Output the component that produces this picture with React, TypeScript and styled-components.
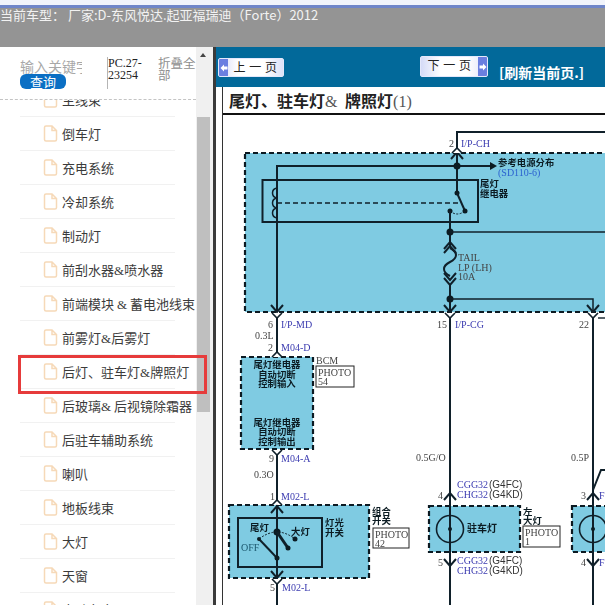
import React from "react";
import styled, { createGlobalStyle } from "styled-components";

const Global = createGlobalStyle`
  html, body { margin: 0; padding: 0; background: #fff; }
  body { font-family: "Noto Sans CJK SC", "Liberation Sans", sans-serif; }
`;

const Page = styled.div`
  width: 605px;
  height: 605px;
  overflow: hidden;
  display: flex;
  flex-direction: column;
`;
const TopStrip = styled.div`
  height: 5px;
  flex: none;
  background: #f1f4fb;
  border-bottom: 3px solid #6f86c9;
`;
const Header = styled.div`
  height: 39px;
  flex: none;
  background: #949494;
  color: #f2f2f2;
  font-size: 13px;
  line-height: 13px;
  white-space: nowrap;
`;
const Body = styled.div`
  flex: 1;
  min-height: 0;
  display: flex;
  position: relative;
`;
const Sidebar = styled.aside`
  width: 196px;
  flex: none;
  display: flex;
  flex-direction: column;
  background: #fff;
`;
const SearchRow = styled.div`
  height: 52px;
  flex: none;
  display: flex;
  padding-left: 20px;
  border-bottom: 1px dashed #c4c4c4;
`;
const SearchCol = styled.div`
  width: 87px;
  flex: none;
  padding-top: 12px;
  display: flex;
  flex-direction: column;
`;
const Keyword = styled.input`
  width: 62px;
  height: 15px;
  padding: 0;
  border: 0;
  outline: 0;
  font: 14px/15px "Noto Sans CJK SC", sans-serif;
  &::placeholder { color: #a8a8a8; opacity: 1; }
`;
const QueryButton = styled.button`
  width: 46px;
  height: 15px;
  padding: 0;
  border: 0;
  border-radius: 6px;
  background: #0b6fc4;
  color: #fff;
  font: 13px/15px "Noto Sans CJK SC", sans-serif;
`;
const CodeBox = styled.div`
  width: 39px;
  height: 32px;
  margin-top: 10px;
  flex: none;
  border-left: 1px solid #b5b5b5;
  color: #222;
  font: 12px/12px "Liberation Serif", serif;
`;
const Collapse = styled.div`
  width: 38px;
  margin: 10px 0 0 11px;
  flex: none;
  color: #8e8e8e;
  font-size: 12.5px;
  line-height: 12px;
`;
const ListClip = styled.div`
  flex: 1;
  min-height: 0;
  overflow: hidden;
`;
const List = styled.ul`
  list-style: none;
  margin: -17px 0 0;
  padding: 0 0 0 20px;
`;
const Item = styled.li`
  width: 132px;
  height: 33px;
  border-bottom: 1px solid #f1f1f1;
  display: flex;
  align-items: center;
  gap: 4px;
  padding-left: 23px;
  white-space: nowrap;
  color: #3b3b3b;
  font-size: 13px;
`;
const Amp = styled.span`
  font-family: "Liberation Serif", serif;
`;
const Scrollbar = styled.div`
  width: 17px;
  flex: none;
  background: #f0f0f0;
  display: flex;
  flex-direction: column;
  align-items: flex-start;
  padding-left: 1px;
  box-sizing: border-box;
`;
const ScrollArrow = styled.div`
  width: 0;
  height: 0;
  margin: 6px 0 0 3px;
  border-left: 3.5px solid transparent;
  border-right: 3.5px solid transparent;
  border-bottom: 4px solid #444;
`;
const ScrollThumb = styled.div`
  width: 13px;
  height: 295px;
  margin-top: 60px;
  background: #bfbfbf;
`;
const Divider = styled.div`
  width: 3px;
  flex: none;
  background: #3a3a3a;
`;
const Highlight = styled.div`
  position: absolute;
  left: 18px;
  top: 308px;
  width: 183px;
  height: 33px;
  border: 3px solid #e63b3b;
  pointer-events: none;
`;
const Main = styled.main`
  flex: 1;
  min-width: 0;
  display: flex;
  flex-direction: column;
  background: #fff;
`;
const Toolbar = styled.div`
  height: 40px;
  flex: none;
  display: flex;
  align-items: flex-start;
  background: #02699a;
`;
const PageButton = styled.button<{ $tall?: boolean; $gap: number }>`
  height: ${(p) => (p.$tall ? 21 : 19)}px;
  width: ${(p) => (p.$tall ? 68 : 66)}px;
  margin: ${(p) => (p.$tall ? 9 : 11)}px 0 0 ${(p) => p.$gap}px;
  padding: 0;
  flex: none;
  display: flex;
  align-items: stretch;
  overflow: hidden;
  border: 1px solid #e4e8fb;
  border-radius: 2px;
  background: linear-gradient(90deg, #d5dbf7, #fff 30%, #fff 70%, #dde2f8);
  color: #222;
  font: 12px/16px "Noto Sans CJK SC", sans-serif;
`;
const ButtonLabel = styled.span`
  flex: 1;
  text-align: center;
  white-space: pre;
  letter-spacing: 0.5px;
`;
const ButtonCap = styled.span`
  width: 9px;
  flex: none;
  background: #6a7fe0;
  display: flex;
  align-items: center;
  justify-content: center;
`;
const Refresh = styled.div`
  margin: 16px 0 0 11px;
  color: #fff;
  font-size: 14px;
  line-height: 18px;
  font-weight: 700;
  white-space: nowrap;
`;
const Sheet = styled.div`
  flex: 1;
  min-height: 0;
  margin-left: 6px;
  border-left: 1px solid #333;
  display: flex;
  flex-direction: column;
`;
const Title = styled.div`
  height: 26px;
  flex: none;
  padding-left: 6px;
  border-bottom: 2px solid #111;
  color: #222;
  font-size: 16px;
  line-height: 26px;
  font-weight: 700;
  white-space: nowrap;
`;
const TitleAmp = styled.span`
  font: 400 16px "Liberation Serif", serif;
  color: #555;
  margin-right: 4px;
`;
const TitleNum = styled.span`
  font: 400 16px "Liberation Serif", serif;
  color: #555;
`;
const Diagram = styled.svg`
  display: block;
  flex: none;
  width: 382px;
  height: 490px;
  filter: blur(0.3px);
`;
const Wire = styled.path<{ $w?: number }>`
  fill: none;
  stroke: #10202a;
  stroke-width: ${(p) => p.$w ?? 2};
`;
const Zone = styled.rect`
  fill: #7fcbe2;
  stroke: #0c1a22;
  stroke-width: 2.2;
  stroke-dasharray: 5 3;
`;
const PhotoFrame = styled.rect`
  fill: #fff;
  stroke: #222;
  stroke-width: 1;
`;
const Serif = styled.text<{ $c?: string; $s?: number }>`
  font-family: "Liberation Serif", serif;
  font-size: ${(p) => p.$s ?? 10}px;
  fill: ${(p) => p.$c ?? "#444"};
`;
const Sans = styled.text`
  font-family: "Liberation Sans", sans-serif;
  font-size: 10px;
  fill: #333;
`;
const Cjk = styled.text<{ $s?: number }>`
  font-family: "Noto Sans CJK SC", sans-serif;
  font-size: ${(p) => p.$s ?? 9.4}px;
  font-weight: 700;
  fill: #0b1b22;
`;

const items = [
  "主线束", "倒车灯", "充电系统", "冷却系统", "制动灯", "前刮水器&喷水器",
  "前端模块 & 蓄电池线束", "前雾灯&后雾灯", "后灯、驻车灯&牌照灯", "后玻璃& 后视镜除霜器",
  "后驻车辅助系统", "喇叭", "地板线束", "大灯", "天窗", "电动车窗",
];

const FileIcon = () => (
  <svg width="15" height="17" viewBox="0 0 15 17" style={{ flex: "none" }}>
    <path d="M1.5 2.5 Q1.5 1 3 1 H9 L13.5 5.5 V14.5 Q13.5 16 12 16 H3 Q1.5 16 1.5 14.5 Z M9 1 V5.5 H13.5" fill="#fff" stroke="#f6d9b8" strokeWidth="1.5" />
  </svg>
);

const withAmp = (s: string) =>
  s.split("&").map((part, i) => (
    <React.Fragment key={i}>
      {i > 0 && <Amp>&amp;</Amp>}
      {part}
    </React.Fragment>
  ));

const down = (x: number, y: number) => `M${x - 6} ${y - 7} L${x} ${y} L${x + 6} ${y - 7}`;
const up = (x: number, y: number) => `M${x - 6} ${y + 7} L${x} ${y} L${x + 6} ${y + 7}`;

const Dot = ({ x, y, r = 3.5 }: { x: number; y: number; r?: number }) => <circle cx={x} cy={y} r={r} fill="#0b1b22" />;

const Pin = ({ x, y, flip }: { x: number; y: number; flip?: boolean }) => (
  <path
    d={flip ? `M${x - 5} ${y + 5} L${x} ${y} L${x + 5} ${y + 5}` : `M${x - 5} ${y} L${x} ${y + 5} L${x + 5} ${y}`}
    fill="#fff"
    stroke="#10202a"
    strokeWidth="1.6"
  />
);

const Photo = ({ x, y, w, h, n }: { x: number; y: number; w: number; h: number; n: string }) => (
  <>
    <PhotoFrame x={x} y={y} width={w} height={h} />
    <Serif x={x + 2} y={y + 10}>PHOTO</Serif>
    <Serif x={x + 2} y={y + 19}>{n}</Serif>
  </>
);

const BLUE = "#3b3bb0";

const WiringDiagram = () => (
  <Diagram viewBox="223 115 382 490">
    <Zone x={245} y={153} width={400} height={159} />
    <Zone x={241} y={357} width={72} height={92} />
    <Zone x={229} y={505} width={140} height={73} />
    <Zone x={429} y={506} width={91} height={46} />
    <Zone x={572} y={506} width={60} height={46} />

    <Wire d="M457 150 V132 H605" />
    <Wire d="M457 150 V193" />
    <Wire d={up(457, 152)} />
    <Pin x={457} y={148} flip />
    <Wire d="M277 312 V166 H490" />
    <path d="M490 162 L497 166 L490 170 Z" fill="#0b1b22" />
    <Dot x={457} y={166} />
    <Wire d="M262.5 180 H478 V222 H262.5 Z" />
    <Wire $w={1.5} d="M277 188 c-6 1 -6 9 0 10 c-6 1 -6 9 0 10 c-6 1 -6 9 0 10" />
    <path d="M277 203 H462" fill="none" stroke="#10202a" strokeWidth="1.3" strokeDasharray="5 3" />
    <Dot x={457} y={193} r={2.5} />
    <Wire d="M457 193 L465 211" />
    <Dot x={465} y={211} r={2.5} />
    <Dot x={450} y={211} r={2.5} />
    <path d="M450 211 Q457 217 465 211" fill="none" stroke="#10202a" strokeWidth="1" strokeDasharray="2 1.5" />
    <Wire d="M450 211 V605" />
    <Dot x={450} y={232} />
    <Wire $w={1.4} d="M450 232 H605" />
    <path d="M442 247 H458 V288 H442 Z" fill="#7fcbe2" />
    <Wire d={up(450, 242)} />
    <Wire d={up(450, 246)} />
    <Wire d="M450 248 c8 4 8 10 0 14 c-8 4 -8 10 0 14" />
    <Wire d={down(450, 280)} />
    <Wire d={down(450, 285)} />
    <Wire d="M450 285 V299" />
    <Dot x={450} y={299} />
    <Wire $w={1.5} d="M450 299 H593 V312" />
    <Wire d={down(277, 312)} />
    <Wire d={down(450, 312)} />
    <Wire d={down(593, 312)} />
    <Pin x={277} y={313} />
    <Pin x={450} y={313} />
    <Pin x={593} y={313} />
    <Wire d="M277 318 V355" />
    <Wire d="M593 318 V605" />
    <Wire $w={1.4} d="M598 318 H605" />
    <Pin x={277} y={352} flip />
    <Pin x={277} y={450} />
    <Wire d="M277 455 V605" />
    <Pin x={277} y={500} flip />
    <Wire d={up(277, 506)} />
    <Wire d={down(277, 578)} />
    <Pin x={277} y={579} />

    <Wire d="M238 518 H322 V567 H238 Z" />
    <Dot x={277} y={532} />
    <Wire $w={3} d="M277 532 L288 548" />
    <Dot x={288} y={548} r={2.5} />
    <Wire d="M259 539 L277 558" />
    <Dot x={277} y={558} r={2.5} />
    <Dot x={259} y={539} r={2} />
    <Dot x={295} y={539} r={2.5} />
    <path d="M259 539 Q277 525 295 539" fill="none" stroke="#10202a" strokeWidth="1" strokeDasharray="2 1.5" />

    <Wire d={up(450, 493)} />
    <Wire d={down(450, 566)} />
    <circle cx={450} cy={529} r={13.5} fill="none" stroke="#10202a" strokeWidth="1.6" />
    <Dot x={450} y={529} r={2} />
    <Wire d={up(593, 493)} />
    <Wire d={down(593, 566)} />
    <Wire d="M593 490 L601 470 H605" />
    <circle cx={593} cy={529} r={13.5} fill="none" stroke="#10202a" strokeWidth="1.6" />
    <Dot x={593} y={529} r={2} />

    <Serif x={449} y={147} $s={10}>2</Serif>
    <Serif x={461} y={147} $c={BLUE}>I/P-CH</Serif>
    <Cjk x={498} y={166}>参考电源分布</Cjk>
    <Serif x={498} y={176} $c="#2b62d0" $s={10}>(SD110-6)</Serif>
    <Cjk x={480} y={187}>尾灯</Cjk>
    <Cjk x={480} y={197}>继电器</Cjk>
    <Serif x={458} y={261}>TAIL</Serif>
    <Serif x={458} y={271}>LP (LH)</Serif>
    <Serif x={458} y={280}>10A</Serif>
    <Serif x={268} y={328}>6</Serif>
    <Serif x={281} y={328} $c={BLUE}>I/P-MD</Serif>
    <Serif x={437} y={328}>15</Serif>
    <Serif x={455} y={328} $c={BLUE}>I/P-CG</Serif>
    <Serif x={579} y={328}>22</Serif>
    <Serif x={255} y={339}>0.3L</Serif>
    <Serif x={268} y={351}>2</Serif>
    <Serif x={281} y={351} $c={BLUE}>M04-D</Serif>

    <Cjk x={277} y={368} textAnchor="middle">尾灯继电器</Cjk>
    <Cjk x={277} y={378} textAnchor="middle">自动切断</Cjk>
    <Cjk x={277} y={387} textAnchor="middle">控制输入</Cjk>
    <Cjk x={277} y={426} textAnchor="middle">尾灯继电器</Cjk>
    <Cjk x={277} y={435} textAnchor="middle">自动切断</Cjk>
    <Cjk x={277} y={445} textAnchor="middle">控制输出</Cjk>
    <Serif x={316} y={364}>BCM</Serif>
    <Photo x={316} y={366} w={38} h={21} n="54" />

    <Serif x={269} y={462}>9</Serif>
    <Serif x={281} y={462} $c={BLUE}>M04-A</Serif>
    <Serif x={254} y={478}>0.3O</Serif>
    <Serif x={270} y={500}>1</Serif>
    <Serif x={281} y={500} $c={BLUE}>M02-L</Serif>
    <Cjk x={250} y={531}>尾灯</Cjk>
    <Cjk x={291} y={535}>大灯</Cjk>
    <Serif x={241} y={551} $c="#1d5a70">OFF</Serif>
    <Cjk x={325} y={526}>灯光</Cjk>
    <Cjk x={325} y={536}>开关</Cjk>
    <Cjk x={372} y={515}>组合</Cjk>
    <Cjk x={372} y={524}>开关</Cjk>
    <Photo x={373} y={528} w={36} h={20} n="42" />
    <Serif x={270} y={591}>5</Serif>
    <Serif x={282} y={591} $c={BLUE}>M02-L</Serif>

    <Serif x={416} y={461}>0.5G/O</Serif>
    <Serif x={571} y={461}>0.5P</Serif>
    <Serif x={457} y={488} $c={BLUE}>CGG32</Serif>
    <Sans x={489} y={488}>(G4FC)</Sans>
    <Serif x={457} y={498} $c={BLUE}>CHG32</Serif>
    <Sans x={489} y={498}>(G4KD)</Sans>
    <Serif x={438} y={499}>4</Serif>
    <Serif x={581} y={499}>3</Serif>
    <Serif x={599} y={499} $c={BLUE}>F</Serif>
    <Serif x={438} y={566}>5</Serif>
    <Serif x={581} y={566}>4</Serif>
    <Serif x={599} y={566} $c={BLUE}>F</Serif>
    <Serif x={457} y={564} $c={BLUE}>CGG32</Serif>
    <Sans x={489} y={564}>(G4FC)</Sans>
    <Serif x={457} y={574} $c={BLUE}>CHG32</Serif>
    <Sans x={489} y={574}>(G4KD)</Sans>
    <Cjk x={467} y={532} $s={10}>驻车灯</Cjk>
    <Cjk x={523} y={515}>左</Cjk>
    <Cjk x={523} y={524}>大灯</Cjk>
    <Photo x={523} y={526} w={37} h={21} n="1" />
  </Diagram>
);

const Arrow = ({ dir }: { dir: "left" | "right" }) => (
  <svg width="8" height="8" viewBox="0 0 8 8">
    <path d={dir === "left" ? "M0.5 4 L4 0.5 V2.5 H7.5 V5.5 H4 V7.5 Z" : "M7.5 4 L4 0.5 V2.5 H0.5 V5.5 H4 V7.5 Z"} fill="#fff" />
  </svg>
);

export default function App() {
  return (
    <Page>
      <Global />
      <TopStrip />
      <Header>当前车型： 厂家:D-东风悦达.起亚福瑞迪（Forte）2012</Header>
      <Body>
        <Sidebar>
          <SearchRow>
            <SearchCol>
              <Keyword placeholder="输入关键字" />
              <QueryButton>查询</QueryButton>
            </SearchCol>
            <CodeBox>PC.27-23254</CodeBox>
            <Collapse>折叠全部</Collapse>
          </SearchRow>
          <ListClip>
            <List>
              {items.map((t) => (
                <Item key={t}>
                  <FileIcon />
                  <span>{withAmp(t)}</span>
                </Item>
              ))}
            </List>
          </ListClip>
        </Sidebar>
        <Scrollbar>
          <ScrollArrow />
          <ScrollThumb />
        </Scrollbar>
        <Divider />
        <Main>
          <Toolbar>
            <PageButton $gap={2}>
              <ButtonCap><Arrow dir="left" /></ButtonCap>
              <ButtonLabel>上 一 页</ButtonLabel>
            </PageButton>
            <PageButton $tall $gap={136}>
              <ButtonLabel>下 一 页</ButtonLabel>
              <ButtonCap><Arrow dir="right" /></ButtonCap>
            </PageButton>
            <Refresh>[刷新当前页.]</Refresh>
          </Toolbar>
          <Sheet>
            <Title>尾灯、驻车灯<TitleAmp>&amp;</TitleAmp> 牌照灯<TitleNum>(1)</TitleNum></Title>
            <WiringDiagram />
          </Sheet>
        </Main>
        <Highlight />
      </Body>
    </Page>
  );
}
